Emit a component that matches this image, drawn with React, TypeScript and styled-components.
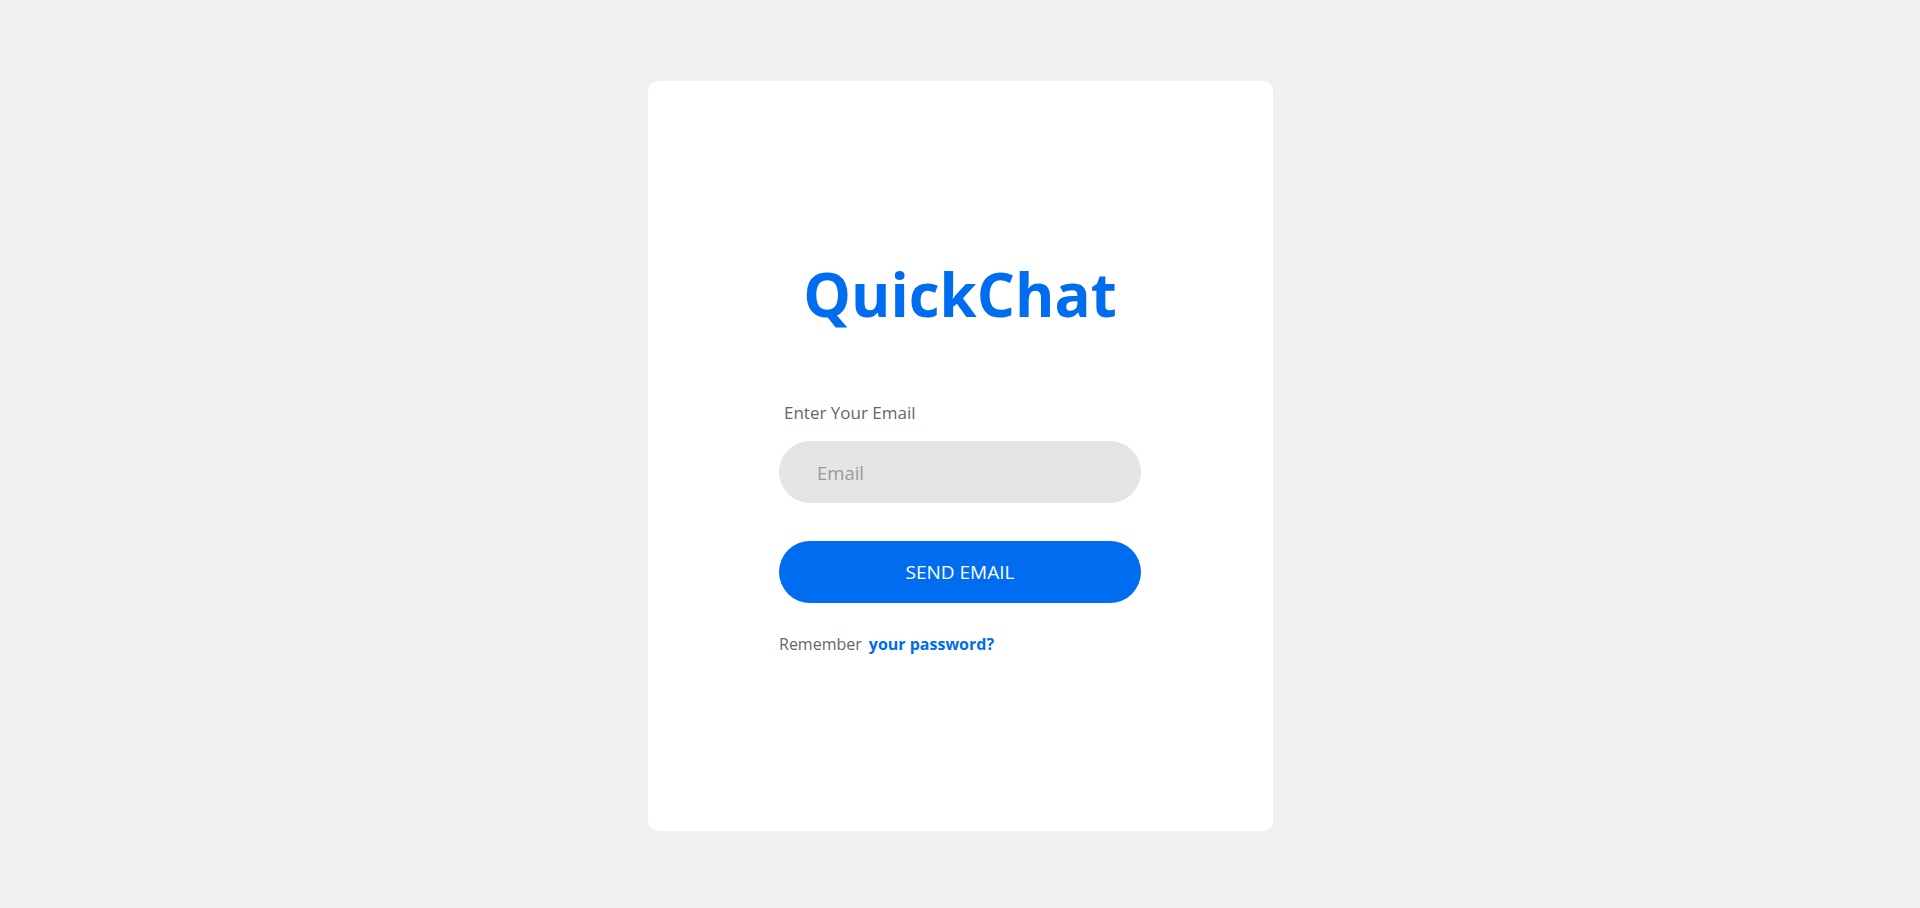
import React, { useState } from "react";
import styled, { createGlobalStyle } from "styled-components";

const GlobalStyle = createGlobalStyle`
  html, body {
    margin: 0;
    padding: 0;
    background: #f0f0f0;
    font-family: "Open Sans", "Liberation Sans", sans-serif;
  }
  * {
    box-sizing: border-box;
  }
`;

const Page = styled.div`
  width: 100%;
  height: 908px;
  display: flex;
  align-items: flex-start;
  justify-content: center;
  padding-top: 81px;
`;

const Card = styled.div`
  width: 625px;
  height: 750px;
  background: #ffffff;
  border-radius: 10px;
  display: flex;
  flex-direction: column;
  align-items: center;
  padding-top: 172px;
`;

const Title = styled.h1`
  margin: 0;
  font-size: 60px;
  font-weight: 700;
  color: #006cef;
  line-height: normal;
`;

const Form = styled.form`
  width: 362px;
  display: flex;
  flex-direction: column;
  margin-top: 66px;
`;

const Label = styled.label`
  font-size: 17px;
  color: #666666;
  padding-left: 5px;
  line-height: normal;
  margin-bottom: 17px;
`;

const Input = styled.input`
  width: 100%;
  height: 62px;
  border: none;
  outline: none;
  border-radius: 31px;
  background: #e5e5e5;
  padding: 0 38px;
  font-family: inherit;
  font-size: 18.5px;
  color: #333;

  &::placeholder {
    color: #9a9a9a;
  }
`;

const Button = styled.button`
  width: 100%;
  height: 62px;
  margin-top: 38px;
  border: none;
  border-radius: 31px;
  background: #006cef;
  color: #ffffff;
  font-family: inherit;
  font-size: 19px;
  cursor: pointer;
`;

const Footer = styled.div`
  display: flex;
  gap: 7px;
  margin-top: 30px;
  font-size: 16px;
  line-height: normal;
`;

const Muted = styled.span`
  color: #666666;
`;

const Link = styled.a<{ $bold?: boolean }>`
  color: #006cef;
  font-weight: ${(p) => (p.$bold ? 700 : 400)};
  text-decoration: none;
  cursor: pointer;
`;

const App: React.FC = () => {
  const [email, setEmail] = useState("");

  return (
    <>
      <GlobalStyle />
      <Page>
        <Card>
          <Title>QuickChat</Title>
          <Form onSubmit={(e) => e.preventDefault()}>
            <Label htmlFor="email">Enter Your Email</Label>
            <Input
              id="email"
              type="email"
              placeholder="Email"
              value={email}
              onChange={(e) => setEmail(e.target.value)}
            />
            <Button type="submit">SEND EMAIL</Button>
            <Footer>
              <Muted>Remember</Muted>
              <Link $bold>your password?</Link>
            </Footer>
          </Form>
        </Card>
      </Page>
    </>
  );
};

export default App;
